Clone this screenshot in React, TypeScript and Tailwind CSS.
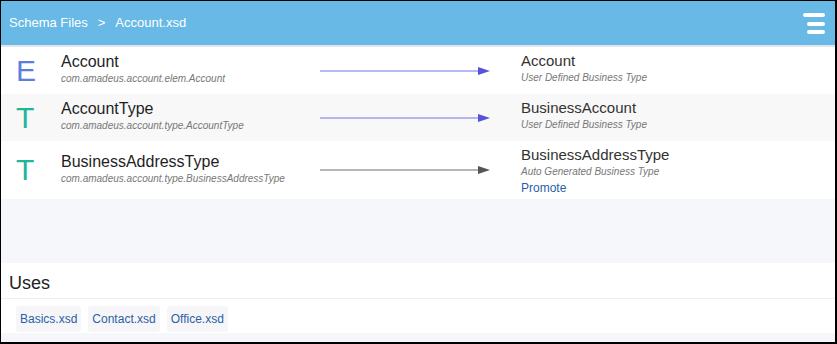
import React from "react";

type Row = {
  letter: string;
  letterColor: string;
  name: string;
  fq: string;
  target: string;
  targetSub: string;
  promote?: boolean;
  bg: string;
  minH: string;
  arrow: "blue" | "gray";
};

const rows: Row[] = [
  {
    letter: "E",
    letterColor: "text-[#5a7fe0]",
    name: "Account",
    fq: "com.amadeus.account.elem.Account",
    target: "Account",
    targetSub: "User Defined Business Type",
    bg: "bg-white",
    minH: "min-h-[47px]",
    arrow: "blue",
  },
  {
    letter: "T",
    letterColor: "text-[#22b598]",
    name: "AccountType",
    fq: "com.amadeus.account.type.AccountType",
    target: "BusinessAccount",
    targetSub: "User Defined Business Type",
    bg: "bg-[#f8f8f8]",
    minH: "min-h-[47px]",
    arrow: "blue",
  },
  {
    letter: "T",
    letterColor: "text-[#22b598]",
    name: "BusinessAddressType",
    fq: "com.amadeus.account.type.BusinessAddressType",
    target: "BusinessAddressType",
    targetSub: "Auto Generated Business Type",
    promote: true,
    bg: "bg-white",
    minH: "min-h-[47px]",
    arrow: "gray",
  },
];

function Arrow({ kind }: { kind: "blue" | "gray" }) {
  const line = kind === "blue" ? "#7373ea" : "#6f6f6f";
  const head = kind === "blue" ? "#5753d6" : "#555555";
  return (
    <svg width="170" height="10" viewBox="0 0 170 10">
      <line x1="0" y1="5" x2="160" y2="5" stroke={line} strokeWidth="1.2" />
      <polygon points="158,1 170,5 158,9" fill={head} />
    </svg>
  );
}

function Hamburger() {
  return (
    <div className="flex flex-col items-end w-[22px]">
      <div className="w-[22px] h-[4px] rounded-full bg-white mt-[0px]" />
      <div className="w-[18px] h-[4px] rounded-full bg-white mt-[5px]" />
      <div className="w-[18px] h-[4px] rounded-full bg-white mt-[4px]" />
    </div>
  );
}

export default function App() {
  return (
    <div className="w-[837px] h-[344px] overflow-hidden bg-white border-l border-t border-r-2 border-b-2 border-black font-['Liberation_Sans',Arial,sans-serif] flex flex-col">
      {/* header */}
      <div className="h-[44px] shrink-0 bg-[#68b9e6] flex items-center justify-between pl-[8px] pr-[10px] text-white text-[13px]">
        <div className="flex items-center">
          <span>Schema Files</span>
          <span className="mx-[10px]">&gt;</span>
          <span>Account.xsd</span>
        </div>
        <Hamburger />
      </div>
      <div className="h-[2px] shrink-0 bg-[#dfe5ea]" />

      {/* rows */}
      {rows.map((r, i) => (
        <div key={i} className={`flex items-stretch shrink-0 ${r.bg} ${r.minH}`}>
          <div className="w-[319px] flex items-center">
            <div
              className={`w-[60px] pl-[15px] text-[30px] leading-none ${r.letterColor}`}
            >
              {r.letter}
            </div>
            <div className="flex flex-col pb-[2px]">
              <div className="text-[16px] leading-[18px] text-[#1e1e1e]">{r.name}</div>
              <div className="text-[10px] leading-[15px] italic text-[#777]">{r.fq}</div>
            </div>
          </div>
          <div className="w-[170px] flex items-center">
            <Arrow kind={r.arrow} />
          </div>
          <div className="ml-[31px] pt-[5px] pb-[1px] flex flex-col self-start">
            <div className="text-[15px] leading-[18px] text-[#333]">{r.target}</div>
            <div className="text-[10px] leading-[15px] italic text-[#777]">{r.targetSub}</div>
            {r.promote && (
              <div className="text-[12px] leading-[19px] text-[#2961a9]">Promote</div>
            )}
          </div>
        </div>
      ))}

      <div className="h-[64px] shrink-0 bg-[#f6f7fb]" />

      {/* uses */}
      <div className="shrink-0 bg-white pt-[9px] pb-[4px] pl-[8px] text-[18px] leading-[22px] text-[#222]">
        Uses
      </div>
      <div className="h-px shrink-0 bg-[#f0f0f2]" />
      <div className="shrink-0 bg-white pt-[7px] pb-[1px] pl-[15px] flex gap-[7px]">
        {["Basics.xsd", "Contact.xsd", "Office.xsd"].map((f) => (
          <div
            key={f}
            className="h-[26px] px-[4px] rounded-[3px] bg-[#f6f6f8] text-[12px] leading-[27px] text-[#2b5fa6]"
          >
            {f}
          </div>
        ))}
      </div>
      <div className="flex-1 bg-[#f6f7fb]" />
    </div>
  );
}
